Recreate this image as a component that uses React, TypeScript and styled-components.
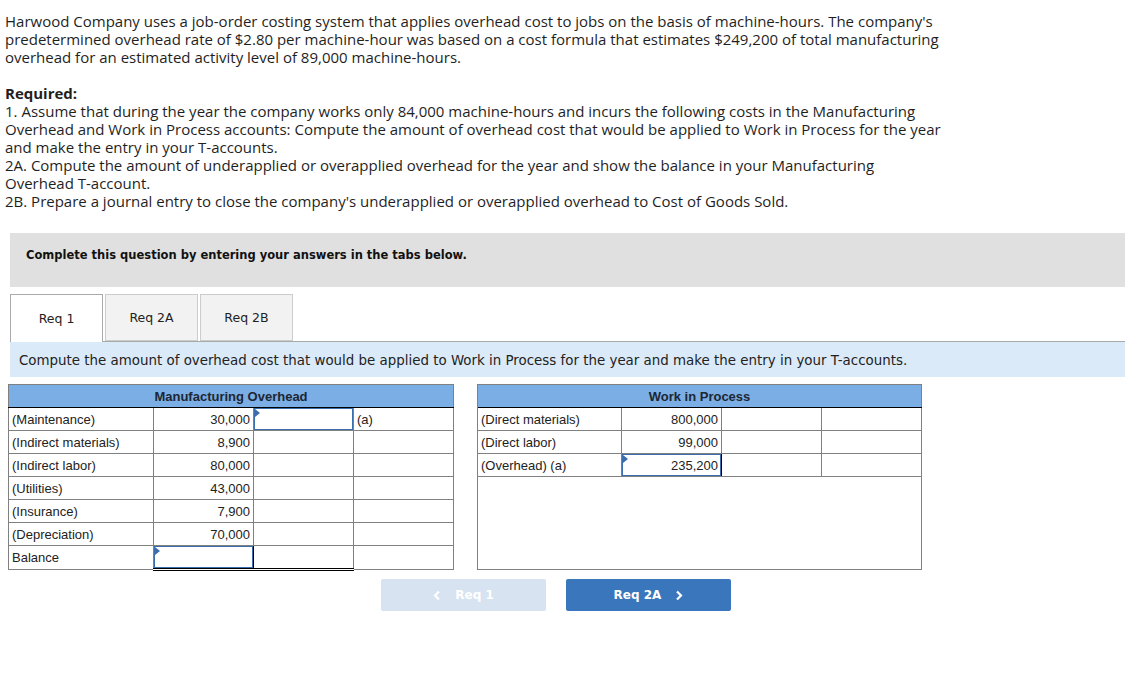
import React from "react";
import styled, { createGlobalStyle } from "styled-components";

const Global = createGlobalStyle`
  html, body { margin: 0; padding: 0; background: #fff; }
  body { width: 1140px; }
`;

const Page = styled.div`
  display: flex;
  flex-direction: column;
  padding: 12px 0 40px 0;
  color: #222;
`;

const Intro = styled.div`
  padding-left: 5px;
  font-family: "Open Sans", "Liberation Sans", sans-serif;
  font-size: 15px;
  line-height: 18px;
  color: #1f1f1f;
  white-space: nowrap;
`;

const Para = styled.p<{ $gap?: boolean }>`
  margin: 0 0 ${(p) => (p.$gap ? "18px" : "0")} 0;
`;

const Strong = styled.span`
  font-weight: 700;
`;

const Notice = styled.div`
  margin: 23px 15px 0 10px;
  height: 54px;
  background: #e0e0e0;
  display: flex;
  align-items: center;
  padding-left: 16px;
  padding-bottom: 10px;
  box-sizing: border-box;
  font-family: "DejaVu Sans", Verdana, sans-serif;
  font-weight: 700;
  font-size: 11.5px;
  color: #111;
`;

const TabBar = styled.div`
  margin: 7px 15px 0 10px;
  display: flex;
  gap: 2px;
  border-bottom: 1px solid #a9a9a9;
  height: 47px;
`;

const Tab = styled.div<{ $active?: boolean }>`
  width: 93px;
  height: ${(p) => (p.$active ? "48px" : "47px")};
  box-sizing: border-box;
  border: 1px solid ${(p) => (p.$active ? "#aaaaaa" : "#cccccc")};
  border-bottom: ${(p) => (p.$active ? "none" : "1px solid #cccccc")};
  background: ${(p) => (p.$active ? "#ffffff" : "#f2f2f2")};
  display: flex;
  align-items: center;
  justify-content: center;
  padding-top: 0;
  font-family: "DejaVu Sans", Verdana, sans-serif;
  font-size: 12.5px;
  color: #222;
  position: relative;
  z-index: 1;
`;

const Instruction = styled.div`
  margin: 0 15px 0 10px;
  height: 35px;
  background: #dbeaf8;
  display: flex;
  align-items: center;
  padding-left: 9px;
  padding-top: 1px;
  box-sizing: border-box;
  font-family: "DejaVu Sans", Verdana, sans-serif;
  font-size: 13.4px;
  color: #222;
`;

const TableWrap = styled.div`
  margin: 7px 0 0 8px;
`;

const Table = styled.table`
  border-collapse: collapse;
  table-layout: fixed;
  font-family: "Liberation Sans", Arial, sans-serif;
  font-size: 13px;
  color: #222;
`;

const Col = styled.col<{ $w: number }>`
  width: ${(p) => p.$w}px;
`;

const Row = styled.tr`
  height: 23px;
`;

const Head = styled.th`
  background: #7aaee4;
  height: 22px;
  padding: 0;
  font-weight: 700;
  font-size: 13px;
  color: #1d2633;
  text-align: center;
  border-top: 1px solid #808080;
  border-left: 1px solid #808080;
  border-right: 1px solid #808080;
  border-bottom: 1px solid #000;
`;

const Gap = styled.td`
  background: #fff;
  padding: 0;
  border-left: 1px solid #808080;
  border-right: 1px solid #808080;
  border-top: none;
  border-bottom: none;
`;

type CellProps = {
  $align?: "left" | "right";
  $leftDark?: boolean;
  $topDark?: boolean;
  $bottom?: "gray" | "double";
};

const Cell = styled.td<CellProps>`
  padding: 0 3px;
  text-align: ${(p) => p.$align ?? "left"};
  white-space: nowrap;
  overflow: hidden;
  border-left: 1px solid ${(p) => (p.$leftDark ? "#000" : "#808080")};
  border-right: 1px solid #808080;
  border-top: 1px solid ${(p) => (p.$topDark ? "#000" : "#808080")};
  border-bottom: ${(p) => (p.$bottom === "double" ? "3px double #000" : "1px solid #808080")};
  vertical-align: middle;
`;

const InputCell = styled.td<CellProps>`
  padding: 0;
  position: relative;
  border-left: 1px solid ${(p) => (p.$leftDark ? "#000" : "#808080")};
  border-right: 1px solid ${(p) => (p.$leftDark ? "#808080" : "#000")};
  border-top: 1px solid ${(p) => (p.$topDark ? "#000" : "#808080")};
  border-bottom: ${(p) => (p.$bottom === "double" ? "3px double #000" : "1px solid #808080")};
`;

const InputBox = styled.div`
  box-sizing: border-box;
  height: 22px;
  border: 1px solid #3b6eae;
  display: flex;
  align-items: center;
  justify-content: flex-end;
  padding-right: 2px;
`;

const Marker = styled.span`
  position: absolute;
  left: 1px;
  top: 1px;
  width: 0;
  height: 0;
  border-top: 4px solid transparent;
  border-bottom: 4px solid transparent;
  border-left: 5px solid #3b6eae;
`;

const Empty = styled.td`
  padding: 0;
  border: 1px solid #808080;
`;

const Buttons = styled.div`
  margin-top: 8px;
  padding-left: 381px;
  display: flex;
  gap: 20px;
`;

const NavButton = styled.button<{ $disabled?: boolean }>`
  width: 165px;
  height: 32px;
  border: none;
  border-radius: 2px;
  background: ${(p) => (p.$disabled ? "#d7e3f1" : "#3a76bb")};
  color: #fff;
  font-family: "DejaVu Sans", Verdana, sans-serif;
  font-weight: 700;
  font-size: 12px;
  display: flex;
  align-items: center;
  justify-content: center;
  gap: 14px;
  padding: 0;
  cursor: pointer;
`;

const Chevron = ({ dir }: { dir: "left" | "right" }) => (
  <svg width="8" height="11" viewBox="0 0 8 11" aria-hidden="true">
    <path
      d={dir === "left" ? "M6 1.5 L2 5.5 L6 9.5" : "M2 1.5 L6 5.5 L2 9.5"}
      fill="none"
      stroke="#fff"
      strokeWidth="2.2"
    />
  </svg>
);

const moRows: [string, string][] = [
  ["(Maintenance)", "30,000"],
  ["(Indirect materials)", "8,900"],
  ["(Indirect labor)", "80,000"],
  ["(Utilities)", "43,000"],
  ["(Insurance)", "7,900"],
  ["(Depreciation)", "70,000"],
];

const wipRows: [string, string][] = [
  ["(Direct materials)", "800,000"],
  ["(Direct labor)", "99,000"],
];

export default function App() {
  return (
    <Page>
      <Global />
      <Intro>
        <Para $gap>
          Harwood Company uses a job-order costing system that applies overhead cost to jobs on the basis of machine-hours. The company's
          <br />
          predetermined overhead rate of $2.80 per machine-hour was based on a cost formula that estimates $249,200 of total manufacturing
          <br />
          overhead for an estimated activity level of 89,000 machine-hours.
        </Para>
        <Para>
          <Strong>Required:</Strong>
          <br />
          1. Assume that during the year the company works only 84,000 machine-hours and incurs the following costs in the Manufacturing
          <br />
          Overhead and Work in Process accounts: Compute the amount of overhead cost that would be applied to Work in Process for the year
          <br />
          and make the entry in your T-accounts.
          <br />
          2A. Compute the amount of underapplied or overapplied overhead for the year and show the balance in your Manufacturing
          <br />
          Overhead T-account.
          <br />
          2B. Prepare a journal entry to close the company's underapplied or overapplied overhead to Cost of Goods Sold.
        </Para>
      </Intro>

      <Notice>Complete this question by entering your answers in the tabs below.</Notice>

      <TabBar>
        <Tab $active>Req 1</Tab>
        <Tab>Req 2A</Tab>
        <Tab>Req 2B</Tab>
      </TabBar>

      <Instruction>
        Compute the amount of overhead cost that would be applied to Work in Process for the year and make the entry in your T-accounts.
      </Instruction>

      <TableWrap>
        <Table>
          <colgroup>
            <Col $w={145} />
            <Col $w={100} />
            <Col $w={100} />
            <Col $w={100} />
            <Col $w={24} />
            <Col $w={144} />
            <Col $w={100} />
            <Col $w={100} />
            <Col $w={100} />
          </colgroup>
          <tbody>
            <Row>
              <Head colSpan={4}>Manufacturing Overhead</Head>
              <Gap rowSpan={8} />
              <Head colSpan={4}>Work in Process</Head>
            </Row>
            {moRows.map(([label, value], i) => (
              <Row key={label}>
                <Cell>{label}</Cell>
                <Cell $align="right">{value}</Cell>
                {i === 0 ? (
                  <InputCell $leftDark>
                    <Marker />
                    <InputBox />
                  </InputCell>
                ) : (
                  <Cell $leftDark />
                )}
                <Cell>{i === 0 ? "(a)" : ""}</Cell>
                {i < 2 && (
                  <>
                    <Cell>{wipRows[i][0]}</Cell>
                    <Cell $align="right">{wipRows[i][1]}</Cell>
                    <Cell $leftDark />
                    <Cell />
                  </>
                )}
                {i === 2 && (
                  <>
                    <Cell>(Overhead) (a)</Cell>
                    <InputCell>
                      <Marker />
                      <InputBox>235,200</InputBox>
                    </InputCell>
                    <Cell $leftDark />
                    <Cell />
                  </>
                )}
                {i === 3 && <Empty colSpan={4} rowSpan={4} />}
              </Row>
            ))}
            <Row>
              <Cell $topDark>Balance</Cell>
              <InputCell $topDark $bottom="double" $leftDark={false}>
                <Marker />
                <InputBox />
              </InputCell>
              <Cell $topDark $leftDark $bottom="double" />
              <Cell $topDark />
            </Row>
          </tbody>
        </Table>
      </TableWrap>

      <Buttons>
        <NavButton $disabled>
          <Chevron dir="left" />
          Req 1
        </NavButton>
        <NavButton>
          Req 2A
          <Chevron dir="right" />
        </NavButton>
      </Buttons>
    </Page>
  );
}
